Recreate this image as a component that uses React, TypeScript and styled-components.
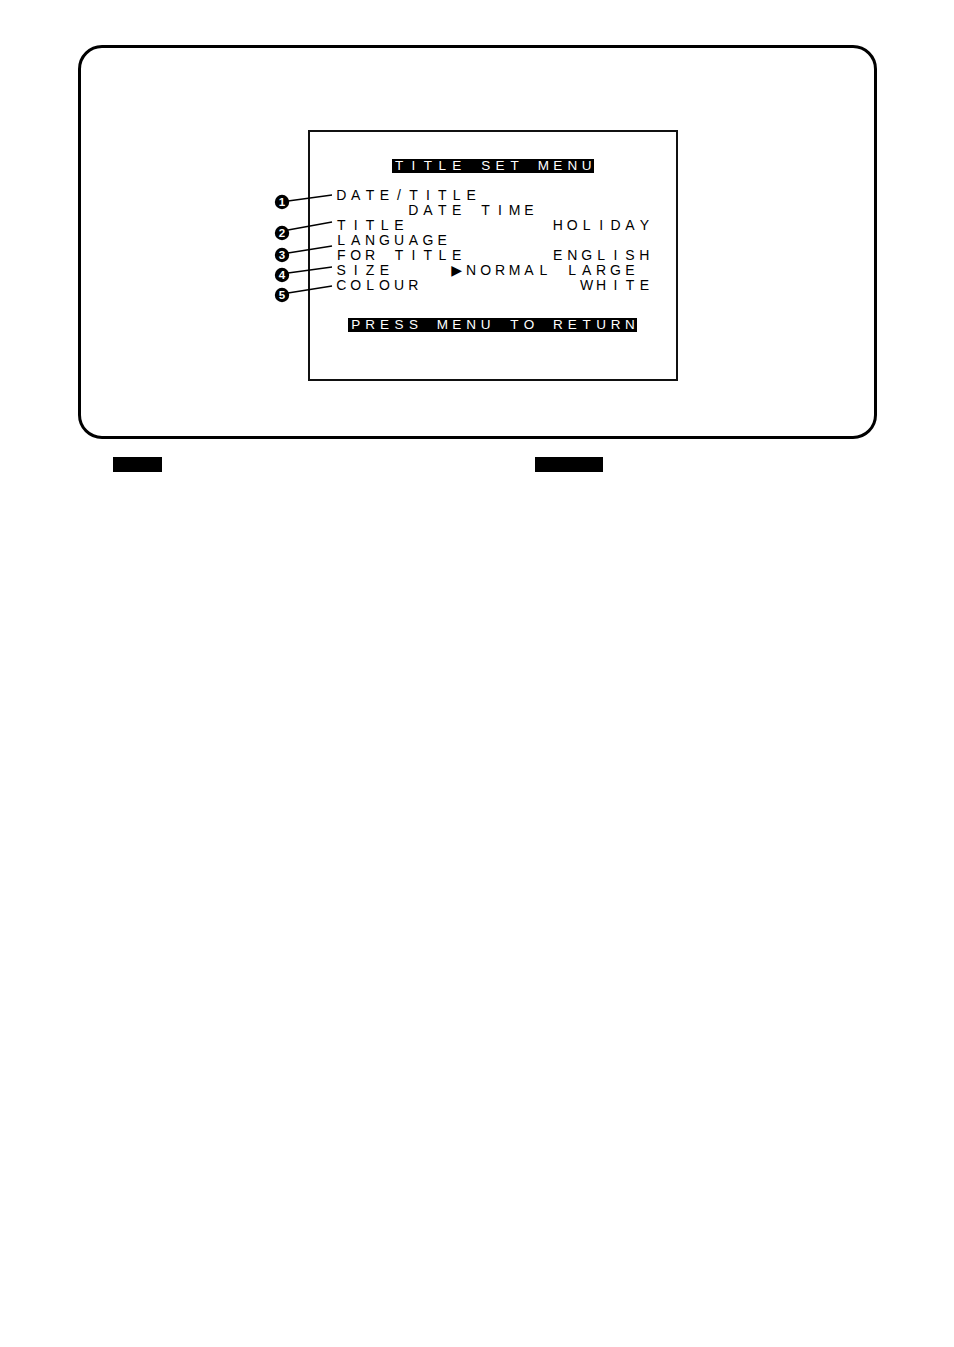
import React from "react";
import styled, { createGlobalStyle } from "styled-components";

const CELL = 14.45;

const Global = createGlobalStyle`
  html, body { margin: 0; padding: 0; background: #fff; }
  body { font-family: "Liberation Sans", "DejaVu Sans", Arial, sans-serif; color: #000; }
`;

const Page = styled.div`
  width: 954px;
  min-height: 1347px;
  box-sizing: border-box;
  padding: 45px 0 0 78px;
  background: #fff;
`;

const Frame = styled.div`
  position: relative;
  box-sizing: border-box;
  width: 799px;
  height: 394px;
  border: 3px solid #000;
  border-radius: 24px;
  padding: 82px 0 0 227px;
`;

const Screen = styled.div`
  box-sizing: border-box;
  width: 370px;
  height: 251px;
  border: 2px solid #111;
  padding: 27px 0 0 24px;
  display: flex;
  flex-direction: column;
  align-items: flex-start;
`;

const Bar = styled.div<{ $col: number; $top: number }>`
  display: flex;
  height: 14px;
  line-height: 14px;
  font-size: 13.5px;
  background: #000;
  color: #fff;
  margin-left: ${(p) => p.$col * CELL}px;
  margin-top: ${(p) => p.$top}px;
`;

const Rows = styled.div`
  display: flex;
  flex-direction: column;
  margin-top: 14.5px;
`;

const Row = styled.div`
  display: flex;
  height: 15px;
  line-height: 15px;
  font-size: 14px;
`;

const Cell = styled.span`
  flex: none;
  width: ${CELL}px;
  text-align: center;
  white-space: pre;
`;

const Callouts = styled.svg`
  position: absolute;
  left: 0;
  top: 0;
  overflow: visible;
  pointer-events: none;
`;

const Below = styled.div`
  display: grid;
  grid-template-columns: 422px 1fr;
  margin-top: 18px;
  padding-left: 35px;
`;

const Heading = styled.div<{ $w: number }>`
  width: ${(p) => p.$w}px;
  height: 15px;
  background: #000;
`;

const Chars: React.FC<{ text: string }> = ({ text }) => (
  <>
    {Array.from(text).map((c, i) => (
      <Cell key={i}>{c === " " ? "\u00a0" : c}</Cell>
    ))}
  </>
);

const lines = [
  "DATE/TITLE",
  "     DATE TIME",
  "TITLE          HOLIDAY",
  "LANGUAGE",
  "FOR TITLE      ENGLISH",
  "SIZE    \u25B6NORMAL LARGE",
  "COLOUR           WHITE",
];

const callouts = [
  { n: 1, cy: 154, ly: 153, ey: 147 },
  { n: 2, cy: 185, ly: 182, ey: 174 },
  { n: 3, cy: 207, ly: 205, ey: 198 },
  { n: 4, cy: 227, ly: 225, ey: 219 },
  { n: 5, cy: 247, ly: 245, ey: 238 },
];

export default function App() {
  return (
    <>
      <Global />
      <Page>
        <Frame>
          <Screen>
            <Bar $col={4} $top={0}>
              <Chars text="TITLE SET MENU" />
            </Bar>
            <Rows>
              {lines.map((l, i) => (
                <Row key={i}>
                  <Chars text={l} />
                </Row>
              ))}
            </Rows>
            <Bar $col={1} $top={25.5}>
              <Chars text="PRESS MENU TO RETURN" />
            </Bar>
          </Screen>
          <Callouts width="300" height="300">
            {callouts.map((c) => (
              <g key={c.n}>
                <line x1={207} y1={c.ly} x2={251} y2={c.ey} stroke="#000" strokeWidth={1.3} />
                <circle cx={201} cy={c.cy} r={7.2} fill="#000" />
                <text
                  x={201}
                  y={c.cy + 4}
                  textAnchor="middle"
                  fill="#fff"
                  fontSize="11.5"
                  fontWeight="bold"
                  fontFamily="'Liberation Sans', Arial, sans-serif"
                >
                  {c.n}
                </text>
              </g>
            ))}
          </Callouts>
        </Frame>
        <Below>
          <Heading $w={49} />
          <Heading $w={68} />
        </Below>
      </Page>
    </>
  );
}
